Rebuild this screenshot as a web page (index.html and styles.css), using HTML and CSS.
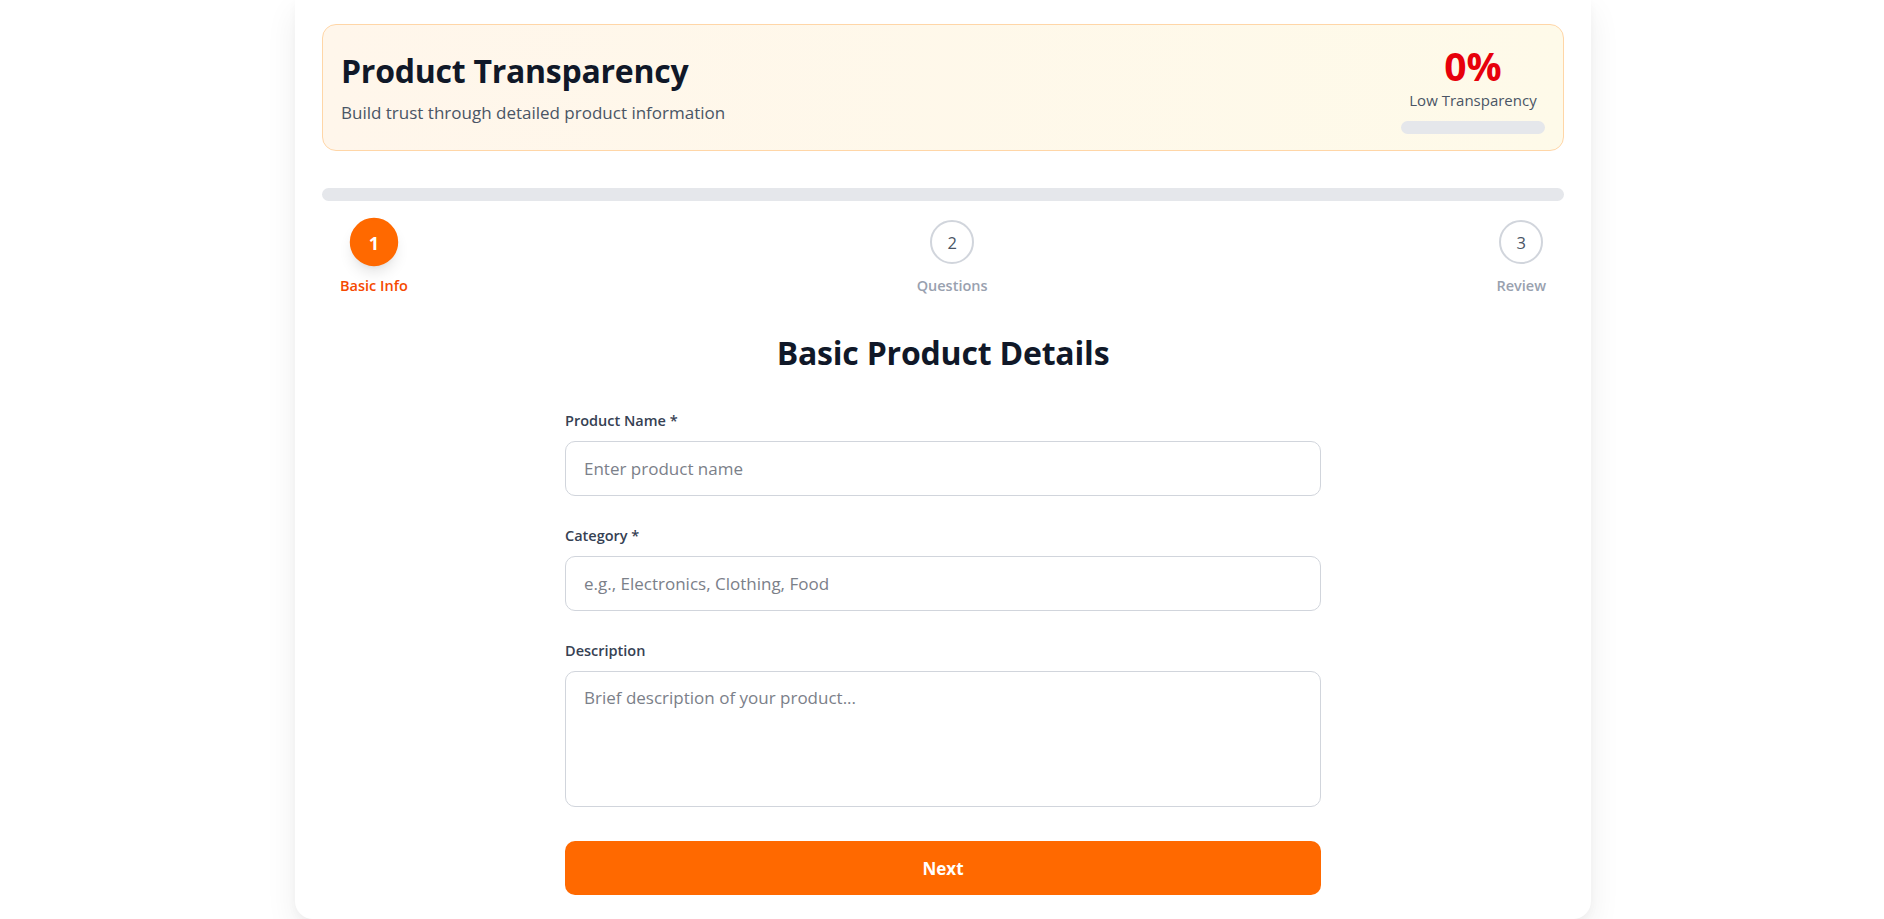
FILE: index.html
```html
<!DOCTYPE html>
<html lang="en">
<head>
<meta charset="utf-8">
<title>Product Transparency</title>
<link rel="stylesheet" href="styles.css">
</head>
<body>
<div class="page">
  <div class="card">
    <header class="hero">
      <div class="hero-text">
        <h1 class="hero-title">Product Transparency</h1>
        <p class="hero-sub">Build trust through detailed product information</p>
      </div>
      <div class="score">
        <div class="score-value">0%</div>
        <div class="score-label">Low Transparency</div>
        <div class="score-track"><div class="score-fill" style="width:0%"></div></div>
      </div>
    </header>

    <div class="progress"><div class="progress-fill" style="width:0%"></div></div>

    <ol class="steps">
      <li class="step step-active"><span class="step-dot">1</span><span class="step-label">Basic Info</span></li>
      <li class="step"><span class="step-dot">2</span><span class="step-label">Questions</span></li>
      <li class="step"><span class="step-dot">3</span><span class="step-label">Review</span></li>
    </ol>

    <section class="form">
      <h2 class="form-title">Basic Product Details</h2>
      <div class="fields">
        <div class="field">
          <label class="field-label" for="name">Product Name *</label>
          <input class="field-input" id="name" type="text" placeholder="Enter product name">
        </div>
        <div class="field">
          <label class="field-label" for="cat">Category *</label>
          <input class="field-input" id="cat" type="text" placeholder="e.g., Electronics, Clothing, Food">
        </div>
        <div class="field">
          <label class="field-label" for="desc">Description</label>
          <textarea class="field-input field-area" id="desc" placeholder="Brief description of your product..."></textarea>
        </div>
      </div>
      <button class="btn-next" type="button">Next</button>
    </section>
  </div>
</div>
</body>
</html>
```

FILE: styles.css
```css
* {
  box-sizing: border-box;
}

html, body {
  margin: 0;
  padding: 0;
  background: #ffffff;
}

body {
  font-family: "Open Sans", "Noto Sans", "Liberation Sans", sans-serif;
  color: #101828;
}

.page {
  display: flex;
  justify-content: center;
  padding-left: 2px;
}

.card {
  width: 1296px;
  background: #ffffff;
  border-radius: 0 0 18px 18px;
  padding: 24px 27px 24px;
  box-shadow: 0 12px 32px rgba(0, 0, 0, 0.07), 0 4px 10px rgba(0, 0, 0, 0.03);
}

/* Header */
.hero {
  height: 127px;
  display: flex;
  align-items: center;
  justify-content: space-between;
  padding: 2px 18px 0;
  border: 1px solid #ffd6a7;
  border-radius: 14px;
  background: linear-gradient(to right, #fff6eb, #fefae9);
}

.hero-title {
  margin: 0 0 8px;
  font-size: 32px;
  line-height: 40px;
  font-weight: 700;
  color: #101828;
  letter-spacing: -0.25px;
}

.hero-sub {
  margin: 0;
  font-size: 17px;
  line-height: 28px;
  color: #4a5565;
}

.score {
  width: 144px;
  display: flex;
  flex-direction: column;
  align-items: center;
}

.score-value {
  font-size: 39px;
  line-height: 44px;
  font-weight: 700;
  color: #e7000b;
}

.score-label {
  margin-top: 1px;
  font-size: 15px;
  line-height: 22px;
  font-weight: 500;
  color: #4a5565;
}

.score-track {
  width: 144px;
  height: 13px;
  margin-top: 10px;
  border-radius: 999px;
  background: #e5e7eb;
  overflow: hidden;
}

.score-fill {
  height: 100%;
  background: #e7000b;
}

/* Progress */
.progress {
  margin-top: 37px;
  height: 13px;
  border-radius: 999px;
  background: #e5e7eb;
  overflow: hidden;
}

.progress-fill {
  height: 100%;
  background: #ff6900;
}

/* Steps */
.steps {
  list-style: none;
  margin: 19px 0 0;
  padding: 0;
  display: flex;
  justify-content: space-between;
}

.step {
  display: flex;
  flex-direction: column;
  align-items: center;
  padding: 0 18px;
}

.step-dot {
  width: 44px;
  height: 44px;
  border-radius: 50%;
  display: flex;
  align-items: center;
  justify-content: center;
  border: 2px solid #d1d5dc;
  background: #ffffff;
  color: #4a5565;
  font-size: 16.5px;
  font-weight: 500;
}

.step-label {
  margin-top: 11px;
  font-size: 14.5px;
  line-height: 22px;
  font-weight: 600;
  color: #99a1af;
}

.step-active .step-dot {
  border-color: #ff6900;
  background: #ff6900;
  color: #ffffff;
  font-weight: 700;
  transform: scale(1.1);
  box-shadow: 0 8px 14px -3px rgba(0, 0, 0, 0.12), 0 3px 6px -4px rgba(0, 0, 0, 0.1);
}

.step-active .step-label {
  color: #f54900;
}

/* Form */
.form {
  width: 756px;
  margin: 36px auto 0;
  display: flex;
  flex-direction: column;
}

.form-title {
  margin: 0 0 36px;
  text-align: center;
  font-size: 32px;
  line-height: 40px;
  font-weight: 700;
  color: #101828;
  letter-spacing: -0.2px;
}

.fields {
  display: flex;
  flex-direction: column;
  gap: 28px;
}

.field {
  display: flex;
  flex-direction: column;
}

.field-label {
  margin-bottom: 8px;
  font-size: 14.5px;
  line-height: 24px;
  font-weight: 600;
  color: #364153;
}

.field-input {
  display: block;
  width: 100%;
  height: 55px;
  margin: 0;
  padding: 12px 18px;
  border: 1px solid #d1d5dc;
  border-radius: 10px;
  background: #ffffff;
  font-family: inherit;
  font-size: 17px;
  line-height: 29px;
  color: #101828;
  outline: none;
}

.field-input::placeholder {
  color: #7b8089;
  opacity: 1;
}

.field-area {
  height: 136px;
  line-height: 28px;
  resize: none;
}

.btn-next {
  margin-top: 34px;
  height: 54px;
  width: 100%;
  border: 0;
  border-radius: 10px;
  background: #ff6900;
  color: #ffffff;
  font-family: inherit;
  font-size: 17px;
  font-weight: 700;
  cursor: pointer;
}
```
